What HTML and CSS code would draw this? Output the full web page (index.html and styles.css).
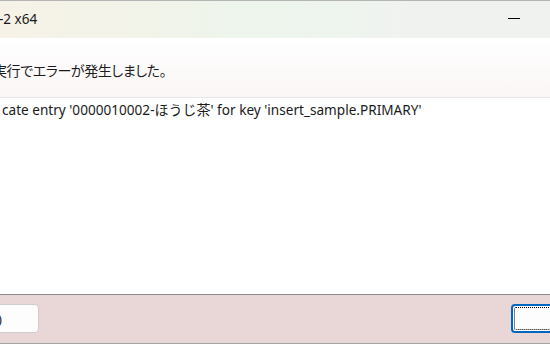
FILE: index.html
```html
<!DOCTYPE html>
<html lang="ja">
<head>
  <meta charset="UTF-8">
  <title>A5:SQL Mk-2 x64</title>
  <link rel="stylesheet" href="styles.css">
</head>
<body>

<div class="dialog">
  <div class="titlebar">
    <div class="title">-2 x64</div>
    <div class="controls">
      <div class="ctl-min"><span class="min-glyph"></span></div>
    </div>
  </div>

  <!-- main instruction -->
  <div class="instruction">
    <span class="instruction-text">実行でエラーが発生しました。</span>
  </div>

  <div class="content">
    <div class="message">cate entry '0000010002-<span class="jp">ほうじ茶</span>' for key 'insert_sample.PRIMARY'</div>
  </div>

  <div class="footer">
    <div class="btn btn-left"><span class="btn-label">)</span></div>
    <div class="btn btn-default"><span class="focus-ring"></span></div>
  </div>
</div>

</body>
</html>
```

FILE: styles.css
```css
html, body {
  margin: 0;
  padding: 0;
  background: #fff;
  overflow: hidden;
}

body {
  width: 550px;
  height: 344px;
  font-family: 'Noto Sans', 'Noto Sans CJK JP', sans-serif;
  color: #1a1a1a;
}

.dialog {
  width: 550px;
  height: 344px;
  display: flex;
  flex-direction: column;
  border-top: 1px solid #b4b4b4;
  box-sizing: border-box;
}

.titlebar {
  height: 37px;
  display: flex;
  justify-content: space-between;
  align-items: center;
  background: linear-gradient(90deg, #f6f2e7 0%, #f2f3e9 25%, #edf5ec 45%, #eef4ee 62%, #f0f2f0 75%, #f0f2f0 100%);
}

.title {
  font-size: 13.5px;
  margin-left: -1px;
  padding-bottom: 1px;
}

.controls {
  display: flex;
  height: 100%;
}

.ctl-min {
  width: 46px;
  margin-right: 13px;
  display: flex;
  align-items: center;
  justify-content: center;
}

.min-glyph {
  display: block;
  width: 12px;
  height: 1px;
  background: #000;
  margin-bottom: 2px;
}

.instruction {
  height: 59px;
  display: flex;
  align-items: center;
  background: linear-gradient(180deg, #ffffff 0%, #fdfbfb 40%, #faf6f5 100%);
  border-bottom: 1px solid #e9e6e6;
}

.instruction-text {
  font-family: 'Noto Sans CJK JP', sans-serif;
  font-size: 14px;
  font-feature-settings: "palt";
  letter-spacing: -0.4px;
  margin-left: -7px;
  padding-top: 5px;
  color: #1c1c1c;
}

.content {
  flex: 1;
  background: #fff;
  padding: 2px 0 0 2px;
}

.message {
  font-size: 13.6px;
  line-height: 18px;
}

.message .jp {
  font-family: 'Noto Sans CJK JP', sans-serif;
  font-size: 14px;
}

.footer {
  height: 50px;
  display: flex;
  justify-content: space-between;
  align-items: flex-start;
  padding-top: 9px;
  box-sizing: border-box;
  background: #e9d6d7;
  border-top: 1px solid #8c8c8c;
  border-bottom: 1px solid #a4a4a4;
}

.btn {
  height: 29px;
  box-sizing: border-box;
  background: #fdfdfd;
  border-radius: 4px;
  display: flex;
  align-items: center;
  font-size: 13px;
}

.btn-left {
  width: 90px;
  margin-left: -51px;
  border: 1px solid #d0cccc;
  justify-content: flex-end;
}

.btn-label {
  padding-right: 36px;
  color: #1a1a1a;
}

.btn-default {
  width: 100px;
  margin-right: -61px;
  border: 2px solid #0067c0;
  padding: 1px;
}

.focus-ring {
  display: block;
  box-sizing: border-box;
  width: 100%;
  height: 100%;
  border: 1px dotted #000;
  border-radius: 2px;
}
```
